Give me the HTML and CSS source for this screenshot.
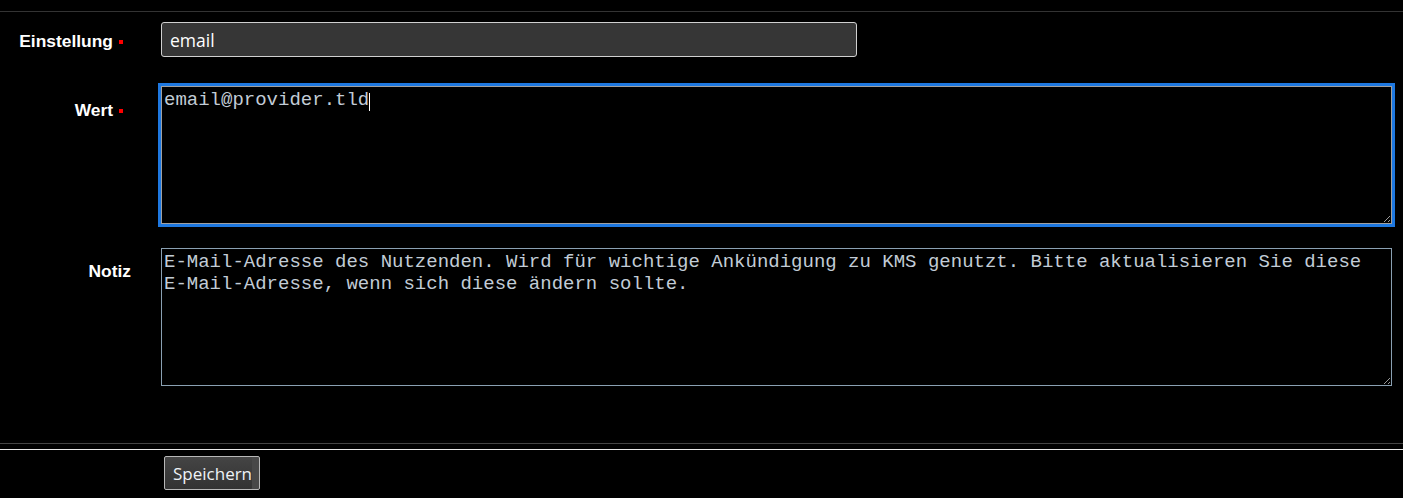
FILE: index.html
```html
<!DOCTYPE html>
<html>
<head>
    <title>Einstellung bearbeiten</title>
    <link rel="stylesheet" href="styles.css">
</head>
<body>
    <form class="settings-form">
        <div class="form-body">
            <div class="form-row">
                <label class="field-label required" for="settingName">Einstellung</label>
                <div class="field">
                    <input type="text" id="settingName" class="text-input" value="email">
                </div>
            </div>

            <div class="form-row">
                <label class="field-label label-top required" for="settingValue">Wert</label>
                <div class="field">
                    <textarea id="settingValue" class="text-area is-focused">email@provider.tld</textarea>
                    <span class="caret"></span>
                </div>
            </div>

            <div class="form-row">
                <label class="field-label label-top" for="settingNote">Notiz</label>
                <div class="field">
                    <textarea id="settingNote" class="text-area note-area">E-Mail-Adresse des Nutzenden. Wird für wichtige Ankündigung zu KMS genutzt. Bitte aktualisieren Sie diese E-Mail-Adresse, wenn sich diese ändern sollte.</textarea>
                </div>
            </div>
        </div>

        <div class="form-actions">
            <button type="submit" class="save-button">Speichern</button>
        </div>
    </form>
</body>
</html>
```

FILE: styles.css
```css
body {
    margin: 0;
    background-color: #000;
    color: #fff;
    font-family: "Liberation Sans", Arial, sans-serif;
}

.form-body {
    margin-top: 11px;
    padding: 10px 11px 57px 0;
    border-top: 1px solid #333;
    border-bottom: 1px solid #444;
    display: flex;
    flex-direction: column;
}

.form-row {
    display: grid;
    grid-template-columns: 161px 1fr;
    align-items: start;
}

.form-row + .form-row {
    margin-top: 29px;
}

.form-row:last-child {
    margin-top: 24px;
}

.field-label {
    padding: 9px 30px 0 0;
    text-align: right;
    font-size: 17.4px;
    line-height: 20px;
    font-weight: bold;
    color: #fff;
}

.label-top {
    padding-top: 14px;
}

.form-row:last-child .label-top {
    padding-top: 13px;
}

/* small red square for required fields */
.required::after {
    content: "";
    display: inline-block;
    width: 4px;
    height: 4px;
    margin: 0 8px 0 6px;
    background-color: #f00;
    vertical-align: 3px;
}

.field {
    position: relative;
}

.text-input {
    box-sizing: border-box;
    display: block;
    width: 696px;
    height: 35px;
    margin: 0;
    padding: 0 8px;
    background-color: #363636;
    border: 1px solid #d0d0d0;
    border-radius: 3px;
    color: #fff;
    font-family: "Open Sans", sans-serif;
    font-size: 17.5px;
}

.text-area {
    box-sizing: border-box;
    display: block;
    width: 100%;
    height: 138px;
    margin: 0;
    padding: 2px;
    background-color: #000;
    border: 1px solid #a0a0a0;
    color: #c2ccd6;
    font-family: "Liberation Mono", "Courier New", monospace;
    font-size: 19px;
    line-height: 22px;
}

.is-focused {
    outline: 3px solid #1e78e0;
    outline-offset: 0;
}

.note-area {
    border-color: #8aa0b2;
}

/* text cursor shown in the active field */
.caret {
    position: absolute;
    left: 208px;
    top: 7px;
    width: 1px;
    height: 18px;
    background-color: #fff;
}

.form-actions {
    margin-top: 5px;
    padding: 6px 0 0 164px;
    border-top: 1px solid #e8e8e8;
}

.save-button {
    box-sizing: border-box;
    height: 34px;
    width: 96px;
    padding: 0 0 0 8px;
    text-align: left;
    background: linear-gradient(#444, #333);
    border: 1px solid #b8b8b8;
    border-radius: 2px;
    box-shadow: inset -7px 0 0 #484848;
    color: #eef2f6;
    font-family: "Open Sans", sans-serif;
    font-size: 17px;
    cursor: pointer;
}
```
